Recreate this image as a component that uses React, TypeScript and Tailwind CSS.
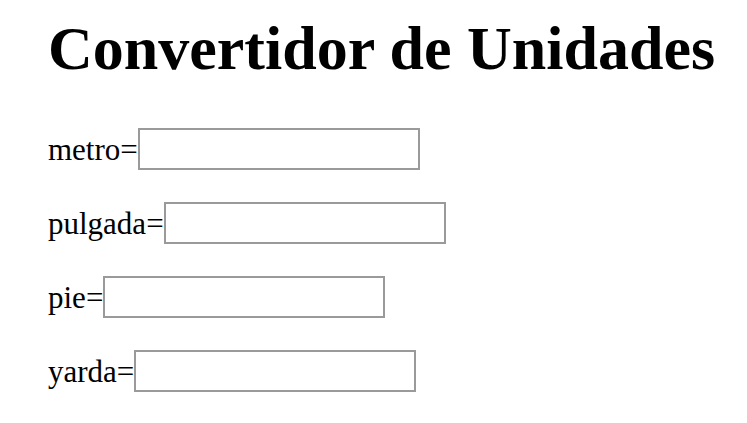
import { useState } from 'react';

// unit factors, in metres
const units = [
  { name: 'metro', factor: 1 },
  { name: 'pulgada', factor: 0.0254 },
  { name: 'pie', factor: 0.3048 },
  { name: 'yarda', factor: 0.9144 },
];

const App = () => {
  const [values, setValues] = useState<Record<string, string>>({});

  const handleChange = (name: string, raw: string) => {
    const factor = units.find((u) => u.name === name)!.factor;
    const num = parseFloat(raw);
    if (raw === '' || isNaN(num)) {
      setValues({ [name]: raw });
      return;
    }
    const metres = num * factor;
    const next: Record<string, string> = {};
    units.forEach((u) => {
      next[u.name] = u.name === name ? raw : String(+(metres / u.factor).toFixed(4));
    });
    setValues(next);
  };

  return (
    <div className="min-h-screen bg-white pl-[48px] pt-[2px] text-black font-['Liberation_Serif','Times_New_Roman',serif]">
      <h1 className="text-[62px] font-bold leading-normal">Convertidor de Unidades</h1>
      <div className="mt-[33px] flex flex-col gap-[32px]">
        {units.map((u) => (
          <div key={u.name} className="flex items-center">
            <label htmlFor={u.name} className="text-[31px] leading-none">
              {u.name}=
            </label>
            <input
              id={u.name}
              type="text"
              value={values[u.name] ?? ''}
              onChange={(e) => handleChange(u.name, e.target.value)}
              className="h-[42px] w-[282px] border-2 border-[#9a9a9a] bg-white px-1 text-[26px] outline-none"
            />
          </div>
        ))}
      </div>
    </div>
  );
};

export default App;
